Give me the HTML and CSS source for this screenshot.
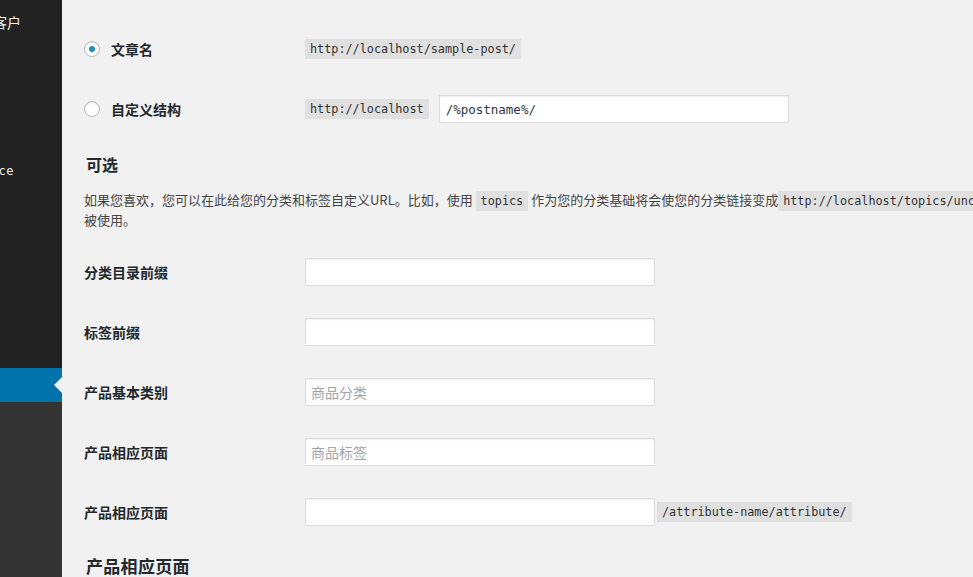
FILE: index.html
```html
<!DOCTYPE html>
<html lang="zh-CN">
<head>
  <meta charset="UTF-8">
  <meta name="viewport" content="width=device-width, initial-scale=1.0">
  <title>固定链接设置</title>
  <link rel="stylesheet" href="styles.css">
</head>
<body>
  <div class="admin">
    <aside class="sidebar">
      <div class="menu-top">
        <div class="menu-item"><span class="menu-label label-clients"><span>客户</span></span></div>
        <div class="menu-item"></div>
        <div class="menu-item"></div>
        <div class="menu-item"></div>
        <div class="menu-separator"></div>
        <div class="menu-item"><span class="menu-label label-woo"><span>WooCommerce</span></span></div>
      </div>
      <div class="menu-item current"></div>
      <div class="submenu"></div>
    </aside>

    <main class="content">
      <form id="permalinkForm" method="post">
        <div class="option-row">
          <label class="option-label">
            <input type="radio" name="selection" value="postname" checked> 文章名
          </label>
          <code>http://localhost/sample-post/</code>
        </div>

        <div class="option-row">
          <label class="option-label">
            <input type="radio" name="selection" value="custom"> 自定义结构
          </label>
          <code>http://localhost</code>
          <input type="text" class="text-input custom-structure" name="permalink_structure" value="/%postname%/">
        </div>

        <h2 class="section-title">可选</h2>
        <p class="description">如果您喜欢，您可以在此给您的分类和标签自定义URL。比如，使用 <code>topics</code> 作为您的分类基础将会使您的分类链接变成<code>http://localhost/topics/uncategorized/</code>。如果您不修改，则默认值将<br>被使用。</p>

        <div class="field-row first">
          <label class="field-label" for="category_base">分类目录前缀</label>
          <input type="text" class="text-input" id="category_base" name="category_base">
        </div>

        <div class="field-row">
          <label class="field-label" for="tag_base">标签前缀</label>
          <input type="text" class="text-input" id="tag_base" name="tag_base">
        </div>

        <div class="field-row">
          <label class="field-label" for="product_category">产品基本类别</label>
          <input type="text" class="text-input" id="product_category" name="product_category" placeholder="商品分类">
        </div>

        <div class="field-row">
          <label class="field-label" for="product_tag">产品相应页面</label>
          <input type="text" class="text-input" id="product_tag" name="product_tag" placeholder="商品标签">
        </div>

        <div class="field-row">
          <label class="field-label" for="product_attribute">产品相应页面</label>
          <input type="text" class="text-input" id="product_attribute" name="product_attribute">
          <code class="attribute-code">/attribute-name/attribute/</code>
        </div>

        <h2 class="section-title bottom-title">产品相应页面</h2>
      </form>
    </main>
  </div>
</body>
</html>
```

FILE: styles.css
```css
/* Global Styles */
html,
body {
  margin: 0;
  padding: 0;
  height: 100%;
  overflow: hidden;
}

body {
  background-color: #f1f1f1;
  font-family: "Noto Sans CJK SC", "Liberation Sans", sans-serif;
  color: #23282d;
}

.admin {
  display: flex;
  min-height: 100vh;
}

/* Admin menu */
.sidebar {
  width: 62px;
  flex-shrink: 0;
  display: flex;
  flex-direction: column;
  background-color: #333;
}

.menu-top {
  height: 368px;
  padding-top: 5px;
  box-sizing: border-box;
  background-color: #222;
  overflow: hidden;
}

.menu-item {
  height: 34px;
  display: flex;
  align-items: center;
  position: relative;
}

.menu-separator {
  height: 13px;
}

.menu-label {
  display: flex;
  justify-content: flex-end;
  white-space: nowrap;
  color: #eee;
}

.label-clients {
  width: 21px;
  font-size: 14px;
}

.label-woo {
  width: 14px;
  font-family: "DejaVu Sans Mono", monospace;
  font-size: 12px;
  letter-spacing: 0.5px;
}

.menu-item.current {
  background-color: #0073aa;
}

.menu-item.current::after {
  content: "";
  position: absolute;
  right: 0;
  top: 50%;
  margin-top: -8px;
  border: 8px solid transparent;
  border-right-color: #f1f1f1;
  border-left-width: 0;
}

.submenu {
  flex: 1;
}

/* Content */
.content {
  width: 1300px;
  flex-shrink: 0;
  padding: 19px 0 0 22px;
}

code {
  display: inline-block;
  padding: 3px 5px 2px;
  background-color: rgba(0, 0, 0, 0.07);
  font-family: "DejaVu Sans Mono", monospace;
  font-size: 11.8px;
  line-height: 15px;
  color: #333;
}

.option-row,
.field-row {
  display: flex;
  align-items: center;
  height: 60px;
}

.option-label {
  width: 221px;
  display: flex;
  align-items: center;
  gap: 11px;
  font-size: 14px;
  font-weight: 700;
  line-height: 20px;
}

.option-label input[type="radio"] {
  appearance: none;
  -webkit-appearance: none;
  margin: 0;
  width: 16px;
  height: 16px;
  border: 1px solid #b4b9be;
  border-radius: 50%;
  background-color: #fff;
  box-shadow: inset 0 1px 2px rgba(0, 0, 0, 0.1);
  box-sizing: border-box;
  display: flex;
  align-items: center;
  justify-content: center;
}

.option-label input[type="radio"]:checked::before {
  content: "";
  width: 6px;
  height: 6px;
  border-radius: 50%;
  background-color: #1e8cbe;
}

.text-input {
  width: 350px;
  height: 28px;
  box-sizing: border-box;
  margin: 0;
  padding: 3px 5px;
  border: 1px solid #ddd;
  box-shadow: inset 0 1px 2px rgba(0, 0, 0, 0.07);
  background-color: #fff;
  font-family: "Noto Sans CJK SC", sans-serif;
  font-size: 14px;
  color: #32373c;
  outline: none;
}

.text-input::placeholder {
  color: #a0a5aa;
}

.custom-structure {
  margin-left: 10px;
  padding-left: 6px;
  font-family: "DejaVu Sans Mono", monospace;
  font-size: 12.5px;
}

.section-title {
  margin: 13px 0 0 2px;
  font-size: 16px;
  line-height: 24px;
  font-weight: 700;
}

.description {
  margin: 15px 0 0;
  font-size: 13px;
  line-height: 18px;
  color: #444;
  white-space: nowrap;
}

.field-row.first {
  margin-top: 13px;
}

.field-label {
  width: 221px;
  font-size: 14px;
  font-weight: 700;
  line-height: 20px;
}

.attribute-code {
  margin-left: 2px;
}

.bottom-title {
  margin-top: 12px;
  font-size: 17px;
  letter-spacing: 0.3px;
}
```
